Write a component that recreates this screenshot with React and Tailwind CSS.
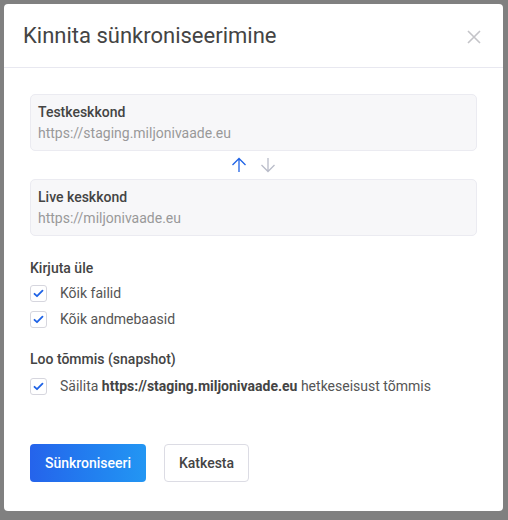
import React from "react";

function Check() {
  return (
    <span className="flex h-[17px] w-[17px] items-center justify-center rounded-[3px] border border-[#d6d6de] bg-white">
      <svg width="11" height="9" viewBox="0 0 11 9" fill="none">
        <path d="M1.5 4.8 L4 7.2 L9.5 1.6" stroke="#1f63e6" strokeWidth="1.8" strokeLinecap="round" strokeLinejoin="round" />
      </svg>
    </span>
  );
}

function Row({ children }) {
  return (
    <div className="flex h-[26px] items-center gap-[13px]">
      <Check />
      <span className="text-[14px] text-[#555]">{children}</span>
    </div>
  );
}

function EnvBox({ title, url }) {
  return (
    <div className="flex h-[57px] flex-col justify-center gap-[3px] rounded-[5px] border border-[#ebebf1] bg-[#f7f7f9] px-[7px]">
      <div className="text-[14px] font-medium leading-[18px] text-[#444]">{title}</div>
      <div className="text-[14px] leading-[18px] text-[#999]">{url}</div>
    </div>
  );
}

export default function App() {
  return (
    <div
      className="relative h-[520px] w-[508px] overflow-hidden bg-[#808080]"
      style={{ fontFamily: "Roboto, 'Liberation Sans', sans-serif" }}
    >
      <div className="absolute left-[4px] top-[4px] flex h-[507px] w-[499px] flex-col rounded-[4px] bg-white">
        <div className="flex h-[64px] items-center justify-between border-b border-[#e8e8f0] pl-[19px] pr-[22px]">
          <span className="text-[22px] text-[#444]">Kinnita sünkroniseerimine</span>
          <svg width="14" height="14" viewBox="0 0 14 14" className="mt-[2px]">
            <path d="M1 1 L13 13 M13 1 L1 13" stroke="#c4c4c8" strokeWidth="1.6" />
          </svg>
        </div>
        <div className="flex flex-col px-[26px] pt-[26px]">
          <EnvBox title="Testkeskkond" url="https://staging.miljonivaade.eu" />
          <div className="flex h-[28px] items-center justify-center gap-[13px]">
            <svg width="16" height="16" viewBox="0 0 16 16" fill="none">
              <path d="M8 15 V1.5 M1.5 8 L8 1.5 L14.5 8" stroke="#1f63e6" strokeWidth="1.3" />
            </svg>
            <svg width="16" height="16" viewBox="0 0 16 16" fill="none">
              <path d="M8 1 V14.5 M1.5 8 L8 14.5 L14.5 8" stroke="#b9bcc9" strokeWidth="1.3" />
            </svg>
          </div>
          <EnvBox title="Live keskkond" url="https://miljonivaade.eu" />
          <div className="mt-[21px] text-[14px] font-medium leading-[22px] text-[#444]">Kirjuta üle</div>
          <div className="mt-[1px] flex flex-col">
            <Row>Kõik failid</Row>
            <Row>Kõik andmebaasid</Row>
          </div>
          <div className="mt-[16px] text-[14px] font-medium leading-[22px] text-[#444]">Loo tõmmis (snapshot)</div>
          <div className="mt-[3px]">
            <Row>
              Säilita <b className="font-bold text-[#444]">https://staging.miljonivaade.eu</b> hetkeseisust tõmmis
            </Row>
          </div>
          <div className="mt-[45px] flex gap-[18px]">
            <button className="h-[38px] w-[116px] rounded-[4px] bg-gradient-to-r from-[#2563eb] to-[#2396f3] text-[14px] font-medium text-white">
              Sünkroniseeri
            </button>
            <button className="h-[38px] w-[85px] rounded-[4px] border border-[#dcdce4] bg-white text-[14px] font-medium text-[#444]">
              Katkesta
            </button>
          </div>
        </div>
      </div>
    </div>
  );
}
